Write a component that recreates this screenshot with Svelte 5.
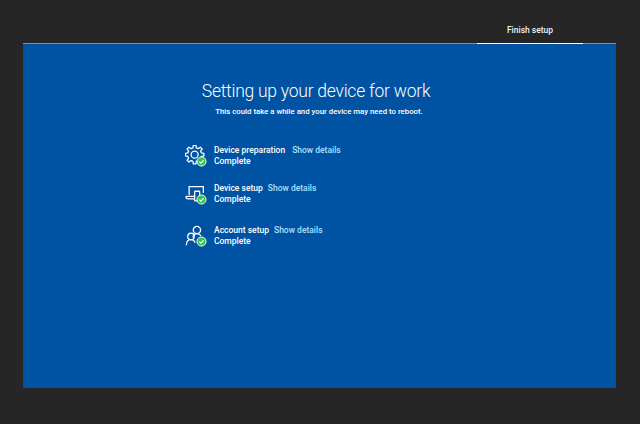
<script>
  const steps = [
    { name: 'Device preparation', icon: 'gear', gap: 'g0' },
    { name: 'Device setup', icon: 'device', gap: 'g1' },
    { name: 'Account setup', icon: 'account', gap: 'g2' }
  ];

  // Outline of an eight-toothed gear
  const teeth = 8;
  const pts = [];
  for (let i = 0; i < teeth; i++) {
    const a = (i / teeth) * Math.PI * 2;
    const w = Math.PI / teeth;
    for (const [r, d] of [[7.6, -0.62], [10.2, -0.36], [10.2, 0.36], [7.6, 0.62]]) {
      const t = a + d * w;
      pts.push(`${(10.5 + r * Math.cos(t)).toFixed(2)} ${(10.5 + r * Math.sin(t)).toFixed(2)}`);
    }
  }
  const gear = 'M' + pts.join('L') + 'Z';
</script>

<div class="page">
  <header class="top">
    <div class="tab">Finish setup</div>
  </header>
  <main class="panel">
    <h1>Setting up your device for work</h1>
    <p class="sub">This could take a while and your device may need to reboot.</p>
    <ul class="steps">
      {#each steps as s}
        <li class="step {s.gap}">
          <svg class="icon" viewBox="0 0 24 24" fill="none" stroke="#fff" stroke-width="1.4">
            {#if s.icon === 'gear'}
              <path d={gear} stroke-linejoin="round"/>
              <circle cx="10.5" cy="10.5" r="3.8"/>
            {:else if s.icon === 'device'}
              <path d="M4.500 13V4h15.500v7"/>
              <path d="M1 14.500h10M1 14.500c0 1.800 1 2.800 2.500 2.800H11"/>
              <rect x="10.500" y="9" width="5.500" height="10.500" rx="0.800"/>
            {:else}
              <circle cx="13" cy="5.500" r="4"/>
              <path d="M8.500 13.500c1-2.500 2.500-4 4.500-4s3.500 .8 4.500 2.500"/>
              <circle cx="6.500" cy="12.500" r="3.500"/>
              <path d="M1.500 22c0-3.500 2-6 5-6 2.500 0 4 1.500 4.500 3.500"/>
            {/if}
            <circle cx="18" cy="18" r="5" fill="#2fc94e" stroke="#fff" stroke-width="1"/>
            <path d="M15.700 18.100l1.700 1.700 3-3.300" stroke="#fff" stroke-width="1.300"/>
          </svg>
          <div class="text">
            <div class="line"><span class="name">{s.name}</span><span class="link">Show details</span></div>
            <div class="status">Complete</div>
          </div>
        </li>
      {/each}
    </ul>
  </main>
</div>

<style>
  :global(body) {
    margin: 0;
    background: #262626;
  }
  .page {
    width: 640px;
    height: 424px;
    box-sizing: border-box;
    padding: 0 24px 36px 23px;
    display: flex;
    flex-direction: column;
    font-family: Roboto, "Noto Sans", sans-serif;
    color: #fff;
  }
  .top {
    height: 43px;
    flex: none;
    display: flex;
    justify-content: flex-end;
    padding-right: 33px;
    border-bottom: 1px solid #8c8c8c;
  }
  .tab {
    width: 106px;
    height: 44px;
    margin-bottom: -1px;
    box-sizing: border-box;
    border-bottom: 1px solid #fff;
    padding-top: 24px;
    text-align: center;
    font-size: 8.5px;
    line-height: 13px;
    font-weight: 500;
    color: #f0f0f0;
  }
  .panel {
    flex: 1;
    background: #0052a2;
    padding-top: 35px;
    display: flex;
    flex-direction: column;
  }
  h1 {
    margin: 0;
    padding-right: 7px;
    text-align: center;
    font-size: 17.5px;
    line-height: 24px;
    font-weight: 300;
    letter-spacing: -0.25px;
  }
  .sub {
    margin: 3px 0 0;
    padding-right: 1px;
    text-align: center;
    font-size: 7.8px;
    line-height: 12px;
    font-weight: 500;
  }
  .steps {
    list-style: none;
    margin: 0;
    padding: 0 0 0 162px;
    display: flex;
    flex-direction: column;
  }
  .step {
    display: flex;
    align-items: flex-start;
    gap: 7px;
    height: 23px;
  }
  .g0 { margin-top: 27px; }
  .g1 { margin-top: 15px; }
  .g2 { margin-top: 19px; }
  .icon {
    flex: none;
    width: 22px;
    height: 22px;
  }
  .text {
    font-size: 8.5px;
    line-height: 11px;
    font-weight: 500;
  }
  .line {
    display: flex;
    gap: 7px;
  }
  .g1 .line,
  .g2 .line {
    gap: 5px;
  }
  .link {
    color: #a8e0ff;
  }
</style>
